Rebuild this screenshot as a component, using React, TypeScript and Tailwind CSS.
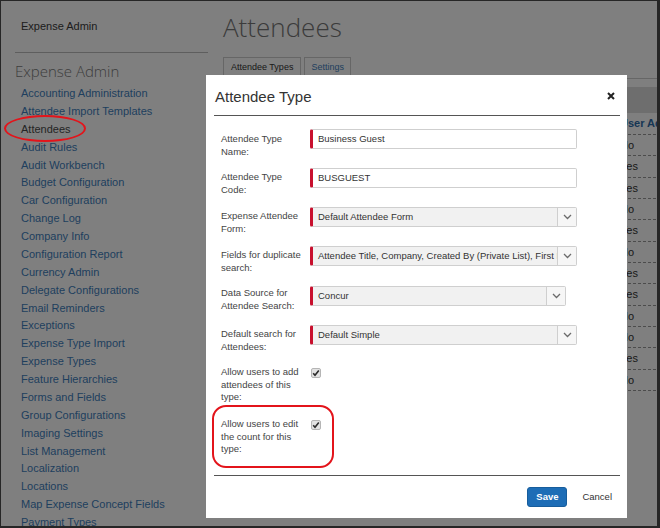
import React from "react";

const navItems = [
  "Accounting Administration",
  "Attendee Import Templates",
  "Attendees",
  "Audit Rules",
  "Audit Workbench",
  "Budget Configuration",
  "Car Configuration",
  "Change Log",
  "Company Info",
  "Configuration Report",
  "Currency Admin",
  "Delegate Configurations",
  "Email Reminders",
  "Exceptions",
  "Expense Type Import",
  "Expense Types",
  "Feature Hierarchies",
  "Forms and Fields",
  "Group Configurations",
  "Imaging Settings",
  "List Management",
  "Localization",
  "Locations",
  "Map Expense Concept Fields",
  "Payment Types",
];

const tableValues = ["No", "Yes", "Yes", "No", "Yes", "No", "Yes", "Yes", "No", "No", "Yes", "No"];

function Chevron() {
  return (
    <svg width="9" height="6" viewBox="0 0 9 6" fill="none">
      <polyline points="1,1 4.5,4.5 8,1" stroke="#6b6b6b" strokeWidth="1.3" />
    </svg>
  );
}

function Check() {
  return (
    <div className="w-[10px] h-[10px] rounded-[2px] border border-[#b5b5b5] bg-[#e2e2e2] flex items-center justify-center">
      <svg width="8" height="8" viewBox="0 0 8 8" fill="none">
        <polyline points="1.2,4.2 3,6.2 6.8,1.5" stroke="#2b2b2b" strokeWidth="1.6" />
      </svg>
    </div>
  );
}

function TextInput({ value }: { value: string }) {
  return (
    <div className="h-[20px] w-[267px] flex items-center border border-[#cfcfcf] border-l-[3px] border-l-[#c8102e] rounded-[2px] bg-white pl-[5px] text-[9.5px] text-[#333]">
      {value}
    </div>
  );
}

function Select({ value, wide = true }: { value: string; wide?: boolean }) {
  return (
    <div
      className={
        wide
          ? "h-[20px] w-[267px] flex border border-[#cfcfcf] border-l-[3px] border-l-[#c8102e] rounded-[2px] bg-[#f1f1f1]"
          : "h-[20px] w-[256px] flex border border-[#cfcfcf] border-l-[3px] border-l-[#c8102e] rounded-[2px] bg-[#f1f1f1]"
      }
    >
      <div className="flex-1 min-w-0 overflow-hidden whitespace-nowrap pl-[5px] flex items-center text-[9.5px] text-[#333]">
        {value}
      </div>
      <div className="w-[19px] shrink-0 border-l border-[#cfcfcf] bg-[#f6f6f6] flex items-center justify-center">
        <Chevron />
      </div>
    </div>
  );
}

export default function App() {
  return (
    <div className="relative w-[660px] h-[528px] overflow-hidden bg-white font-['Liberation_Sans',Arial,sans-serif]">
      {/* Background page */}
      <div className="flex h-full">
        <aside className="w-[208px] shrink-0 pl-[15px] flex flex-col">
          <div className="pl-[6px] pt-[20px] text-[11px] leading-[13px] text-[#3a3a3a]">Expense Admin</div>
          <div className="mt-[19px] border-t border-[#bdbdbd]" />
          <div className="mt-[8px] font-['Open_Sans',sans-serif] font-light text-[15px] leading-[20px] text-[#7a7a7a]">
            Expense Admin
          </div>
          <nav className="mt-[4px] pl-[6px] flex flex-col">
            {navItems.map((n) => (
              <div
                key={n}
                className={
                  n === "Attendees"
                    ? "text-[11px] leading-[17.875px] whitespace-nowrap text-[#4a4a4a]"
                    : "text-[11px] leading-[17.875px] whitespace-nowrap text-[#3f7fbd]"
                }
              >
                {n}
              </div>
            ))}
          </nav>
        </aside>
        <main className="flex-1 pl-[15px] flex flex-col">
          <h1 className="mt-[14px] font-['Open_Sans',sans-serif] font-light text-[26px] leading-[26px] text-[#777]">
            Attendees
          </h1>
          <div className="mt-[17px] flex items-end gap-[3px] border-b border-[#cccccc]">
            <div className="h-[21px] px-[7px] flex items-center border border-b-0 border-[#cccccc] bg-white text-[9px] text-[#333]">
              Attendee Types
            </div>
            <div className="h-[21px] px-[6px] flex items-center border border-b-0 border-[#cccccc] bg-white text-[9px] text-[#3f7fbd]">
              Settings
            </div>
          </div>
          <div className="mt-[8px] h-[26px] bg-[#dcdcdc]" />
          <div className="h-[22px] pl-[397px] flex items-center border-b border-dashed border-[#999] text-[11px] font-bold text-[#2e6ca8] whitespace-nowrap">
            User Admin
          </div>
          {tableValues.map((v, i) => (
            <div
              key={i}
              className="h-[21.33px] pl-[397px] flex items-center border-b border-dashed border-[#999] text-[11px] text-[#333]"
            >
              {v}
            </div>
          ))}
        </main>
      </div>

      {/* Dim overlay */}
      <div className="absolute inset-0 bg-black/50" />

      {/* Annotation ellipse around Attendees */}
      <div className="absolute left-[4px] top-[115px] w-[82px] h-[27px] rounded-[50%] border-2 border-[#e3141b]" />

      {/* Modal */}
      <div className="absolute left-[206px] top-[75px] w-[421px] h-[443px] bg-white flex flex-col">
        <div className="h-[40px] flex justify-between items-start pl-[9px] pr-[12px]">
          <div className="pt-[13px] text-[15px] leading-[18px] text-[#333]">Attendee Type</div>
          <svg className="mt-[17px]" width="8" height="8" viewBox="0 0 8 8">
            <path d="M1 1 L7 7 M7 1 L1 7" stroke="#222" strokeWidth="2" />
          </svg>
        </div>
        <div className="ml-[8px] mr-[7px] border-t border-[#555]" />

        <div className="h-[359px] pl-[15px] pt-[13px] flex flex-col text-[9.5px] leading-[12.5px] text-[#444]">
          <div className="h-[39px] flex items-start">
            <div className="w-[89px] pr-[5px] pt-[4px]">Attendee Type Name:</div>
            <TextInput value="Business Guest" />
          </div>
          <div className="h-[39px] flex items-start">
            <div className="w-[89px] pr-[5px] pt-[3px]">Attendee Type Code:</div>
            <TextInput value="BUSGUEST" />
          </div>
          <div className="h-[39px] flex items-start">
            <div className="w-[89px] pr-[5px] pt-[3px]">Expense Attendee Form:</div>
            <Select value="Default Attendee Form" />
          </div>
          <div className="h-[39px] flex items-start">
            <div className="w-[89px] pr-[5px] pt-[3px]">Fields for duplicate search:</div>
            <Select value="Attendee Title, Company, Created By (Private List), First Name, Last Name" />
          </div>
          <div className="h-[40px] flex items-start pt-[1px]">
            <div className="w-[89px] pr-[5px] pt-[1px]">Data Source for Attendee Search:</div>
            <Select value="Concur" wide={false} />
          </div>
          <div className="h-[39px] flex items-start">
            <div className="w-[89px] pr-[5px] pt-[3px]">Default search for Attendees:</div>
            <Select value="Default Simple" />
          </div>
          <div className="h-[52px] flex items-start">
            <div className="w-[89px] pr-[5px] pt-[2px]">Allow users to add attendees of this type:</div>
            <div className="ml-[1px] mt-[4px]">
              <Check />
            </div>
          </div>
          <div className="flex items-start">
            <div className="w-[89px] pr-[5px] pt-[2px]">Allow users to edit the count for this type:</div>
            <div className="ml-[1px] mt-[4px]">
              <Check />
            </div>
          </div>
        </div>

        <div className="ml-[8px] mr-[7px] border-t border-[#555]" />
        <div className="mt-[11px] flex justify-end items-center pr-[15px]">
          <button className="w-[40px] h-[20px] rounded-[3px] bg-[#1d6db6] border border-[#175d9c] text-white font-bold text-[9.5px]">
            Save
          </button>
          <span className="ml-[15px] text-[9.5px] text-[#333]">Cancel</span>
        </div>
      </div>

      {/* Annotation rectangle */}
      <div className="absolute left-[212px] top-[405px] w-[122px] h-[63px] rounded-[14px] border-2 border-[#e3141b]" />

      {/* Screenshot frame */}
      <div className="absolute inset-0 pointer-events-none border-l border-t border-r-[3px] border-b-[2px] border-[#262626]" />
    </div>
  );
}
